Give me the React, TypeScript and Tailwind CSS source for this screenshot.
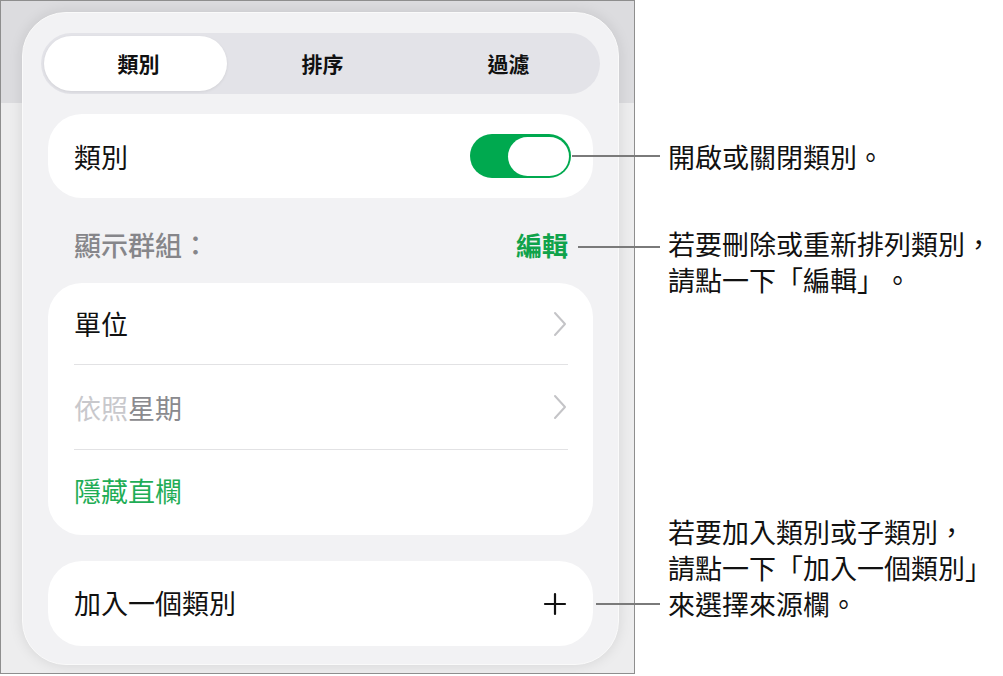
import React from "react";

const FONT = { fontFamily: '"Noto Sans CJK TC", "Noto Sans", sans-serif' };

function Chevron() {
  return (
    <svg width="14" height="26" viewBox="0 0 14 26" fill="none">
      <path d="M2 2 L12 13 L2 24" stroke="#c4c4c7" strokeWidth="2" strokeLinecap="round" strokeLinejoin="round" />
    </svg>
  );
}

function Plus() {
  return (
    <svg width="24" height="24" viewBox="0 0 24 24" fill="none">
      <path d="M12 2 V22 M2 12 H22" stroke="#111" strokeWidth="2.2" strokeLinecap="round" />
    </svg>
  );
}

export default function App() {
  return (
    <div className="relative w-[1003px] h-[676px] bg-white overflow-hidden [text-spacing-trim:space-all]" style={FONT}>
      {/* screenshot frame */}
      <div className="relative w-[635px] h-[674px] border border-[#8e8e8e] flex flex-col overflow-hidden">
        <div className="h-[102px] bg-[#dcdcdf]" />
        <div className="flex-1 bg-[#ededee]" />

        {/* popover */}
        <div className="absolute left-[21px] top-[11px] w-[597px] h-[653px] rounded-[44px] bg-[#f2f2f4] border border-[#fafafa] shadow-[0_0_14px_rgba(0,0,0,0.10)] flex flex-col px-[25px] pt-[20px]">
          {/* segmented control */}
          <div className="-mx-[7px] h-[61px] rounded-full bg-[#e3e3e8] p-[3px] flex">
            <div className="w-[183px] h-full rounded-full bg-white shadow-[0_1px_3px_rgba(0,0,0,0.08)] flex items-center justify-center text-[21px] font-bold text-[#111] pl-[6px]">
              類別
            </div>
            <div className="flex-1 flex items-center justify-center text-[21px] font-bold text-[#111] pl-[4px]">
              排序
            </div>
            <div className="w-[183px] flex items-center justify-center text-[21px] font-bold text-[#111] pl-[6px]">
              過濾
            </div>
          </div>

          {/* toggle card */}
          <div className="mt-[20px] h-[84px] rounded-[34px] bg-white flex items-center justify-between pl-[26px] pr-[22px]">
            <span className="text-[27px] text-[#111] leading-none">類別</span>
            <div className="w-[101px] h-[44px] rounded-full bg-[#00a94f] p-[2.5px] flex justify-end">
              <div className="w-[61px] h-[39px] rounded-full bg-white" />
            </div>
          </div>

          {/* header */}
          <div className="h-[85px] flex items-center justify-between pl-[26px] pr-[25px] pt-[8px]">
            <span className="text-[27px] font-medium text-[#86868a] leading-none">顯示群組：</span>
            <span className="text-[26px] font-bold text-[#10a34b] leading-none">編輯</span>
          </div>

          {/* group card */}
          <div className="rounded-[34px] bg-white flex flex-col pl-[26px] pr-[25px]">
            <div className="h-[82px] flex items-center justify-between border-b border-[#e2e2e4]">
              <span className="text-[27px] text-[#111] leading-none">單位</span>
              <span className="pr-[1px]"><Chevron /></span>
            </div>
            <div className="h-[85px] flex items-center justify-between border-b border-[#e2e2e4]">
              <span className="text-[27px] leading-none">
                <span className="text-[#c8c8cc]">依照</span>
                <span className="text-[#8a8a8e]">星期</span>
              </span>
              <span className="pr-[1px]"><Chevron /></span>
            </div>
            <div className="h-[85px] flex items-center pb-[4px]">
              <span className="text-[27px] text-[#1fad56] leading-none">隱藏直欄</span>
            </div>
          </div>

          {/* add card */}
          <div className="mt-[26px] h-[85px] rounded-[34px] bg-white flex items-center justify-between pl-[26px] pr-[26px]">
            <span className="text-[27px] text-[#111] leading-none pb-[3px]">加入一個類別</span>
            <Plus />
          </div>
        </div>
      </div>

      {/* callout lines */}
      <div className="absolute left-[572px] top-[155px] w-[88px] h-[2px] bg-[#7a7a7a]" />
      <div className="absolute left-[578px] top-[246px] w-[82px] h-[2px] bg-[#7a7a7a]" />
      <div className="absolute left-[596px] top-[603px] w-[64px] h-[2px] bg-[#7a7a7a]" />

      {/* callout texts */}
      <div className="absolute left-[668px] top-[139px] text-[27px] leading-[36px] text-[#111] whitespace-nowrap">
        開啟或關閉類別。
      </div>
      <div className="absolute left-[668px] top-[226px] text-[27px] leading-[36px] text-[#111] whitespace-nowrap">
        <div>若要刪除或重新排列類別，</div>
        <div>請點一下「編輯」。</div>
      </div>
      <div className="absolute left-[668px] top-[514px] text-[27px] leading-[36px] text-[#111] whitespace-nowrap">
        <div>若要加入類別或子類別，</div>
        <div>請點一下「加入一個類別」</div>
        <div>來選擇來源欄。</div>
      </div>
    </div>
  );
}
